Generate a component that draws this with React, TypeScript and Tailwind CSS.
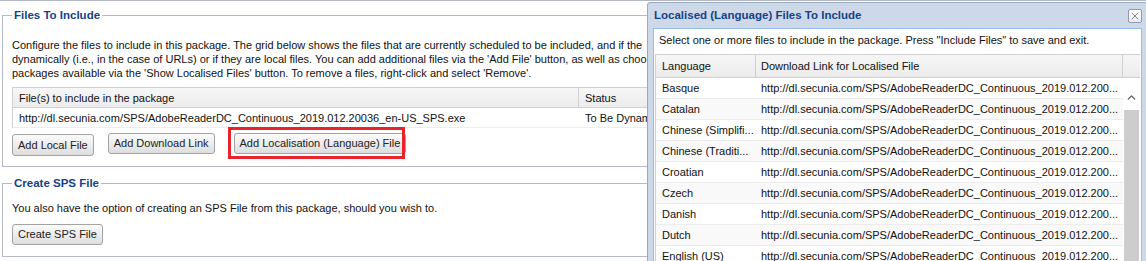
import { X, ChevronUp } from 'lucide-react'

const languages = [
  'Basque',
  'Catalan',
  'Chinese (Simplifi...',
  'Chinese (Traditi...',
  'Croatian',
  'Czech',
  'Danish',
  'Dutch',
  'English (US)',
]

const link = 'http://dl.secunia.com/SPS/AdobeReaderDC_Continuous_2019.012.200...'

function Btn({ label, className = '' }: { label: string; className?: string }) {
  return (
    <button
      className={`shrink-0 px-[5px] rounded-[3px] border border-[#a3a3a3] bg-gradient-to-b from-[#fbfbfb] to-[#dedede] text-[11px] text-[#222] font-['Liberation_Sans',Arial,sans-serif] leading-none ${className}`}
    >
      {label}
    </button>
  )
}

function Section({ title, children, className = '' }: { title: string; children: React.ReactNode; className?: string }) {
  return (
    <fieldset className={`border border-[#b5b8c8] pl-[9px] pr-[9px] ${className}`}>
      <legend className="px-[2px] text-[11.5px] leading-[14px] font-bold text-[#15428b]">{title}</legend>
      {children}
    </fieldset>
  )
}

export default function App() {
  return (
    <div className="relative w-[1146px] h-[261px] overflow-hidden bg-white font-['Liberation_Sans',Arial,sans-serif] text-[11px] leading-[14px] text-[#111]">
      <div className="h-px bg-[#b5b8c8]" />

      <div className="px-[2px] pt-[7px]">
        <Section title="Files To Include" className="pt-[16px] pb-[10px]">
          {/* text runs on under the window, only the visible part is kept */}
          <div className="whitespace-nowrap">
            <div>Configure the files to include in this package. The grid below shows the files that are currently scheduled to be included, and if the</div>
            <div>dynamically (i.e., in the case of URLs) or if they are local files. You can add additional files via the 'Add File' button, as well as choo</div>
            <div>packages available via the 'Show Localised Files' button. To remove a files, right-click and select 'Remove'.</div>
          </div>

          {/* files grid */}
          <div className="mt-[7px] border border-[#d0d0d0] border-b-0">
            <div className="flex h-[20px] bg-gradient-to-b from-[#f7f7f7] to-[#ececec] border-b border-[#d0d0d0]">
              <div className="w-[566px] pl-[6px] flex items-center border-r border-[#d0d0d0]">File(s) to include in the package</div>
              <div className="flex-1 pl-[6px] flex items-center">Status</div>
            </div>
            <div className="flex h-[20px] border-b border-[#ededed]">
              <div className="w-[566px] pl-[6px] flex items-center">http://dl.secunia.com/SPS/AdobeReaderDC_Continuous_2019.012.20036_en-US_SPS.exe</div>
              <div className="flex-1 pl-[6px] flex items-center whitespace-nowrap">To Be Dynam</div>
            </div>
          </div>

          <div className="mt-[5px] flex items-start">
            <Btn label="Add Local File" className="mt-[1px] h-[22px]" />
            <Btn label="Add Download Link" className="ml-[14px] h-[21px]" />
            <Btn label="Add Localisation (Language) File" className="ml-[19px] h-[21px]" />
          </div>
        </Section>

        <Section title="Create SPS File" className="mt-[9px] pt-[11px] pb-[11px]">
          <div className="whitespace-nowrap">You also have the option of creating an SPS File from this package, should you wish to.</div>
          <div className="mt-[9px] flex">
            <Btn label="Create SPS File" className="h-[21px]" />
          </div>
        </Section>
      </div>

      {/* annotation around the localisation button */}
      <div className="absolute left-[228px] top-[127px] w-[177px] h-[32px] border-[3px] border-[#e8232b]" />

      {/* localised files window */}
      <div className="absolute left-[647px] top-[2px] w-[501px] h-[270px] border border-[#99a9c2] rounded-t-[3px] bg-[#cdd9e8] flex flex-col">
        <div className="shrink-0 h-[25px] flex items-center justify-between pl-[6px] pr-[5px]">
          <span className="text-[11.5px] font-bold text-[#15428b] pb-[1px]">Localised (Language) Files To Include</span>
          <span className="w-[14px] h-[14px] rounded-[2px] border border-[#8c9bb0] bg-gradient-to-b from-white to-[#e6ebf2] flex items-center justify-center">
            <X size={12} strokeWidth={1.3} className="text-[#4a4a4a]" />
          </span>
        </div>
        <div className="mx-[5px] flex-1 min-h-0 overflow-hidden border border-[#99bbe8] bg-white pl-[5px] pr-[1px] pt-[4px]">
          <div className="whitespace-nowrap">Select one or more files to include in the package. Press "Include Files" to save and exit.</div>

          <div className="mt-[7px] ml-[-4px] border-l border-[#d0d0d0]">
            <div className="flex h-[24px] bg-gradient-to-b from-[#f6f6f6] to-[#ebebeb] border-y border-[#d0d0d0]">
              <div className="w-[100px] pl-[6px] flex items-center border-r border-[#d0d0d0]">Language</div>
              <div className="flex-1 pl-[5px] flex items-center border-r border-[#d0d0d0]">Download Link for Localised File</div>
              <div className="w-[17px]" />
            </div>
            <div className="flex">
              <div className="flex-1">
                {languages.map((lang, i) => (
                  <div
                    key={lang}
                    className={`flex h-[21px] border-b border-[#ededed] ${i % 2 === 1 ? 'bg-[#f9f9f9]' : 'bg-white'}`}
                  >
                    <div className="w-[100px] pl-[6px] flex items-center whitespace-nowrap">{lang}</div>
                    <div className="flex-1 pl-[5px] flex items-center whitespace-nowrap">{link}</div>
                  </div>
                ))}
              </div>
              <div className="w-[17px] flex flex-col">
                <div className="h-[32px] flex justify-center pt-[13px]">
                  <ChevronUp size={13} strokeWidth={2.5} className="text-[#606060]" />
                </div>
                <div className="flex-1 mx-[1px] bg-[#cdcdcd]" />
              </div>
            </div>
          </div>
        </div>
      </div>
    </div>
  )
}
